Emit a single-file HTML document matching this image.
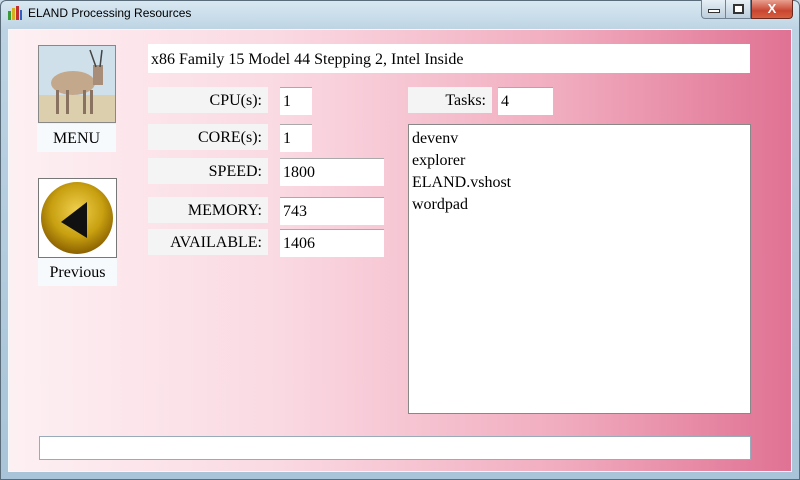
<!DOCTYPE html>
<html><head><style>
*{margin:0;padding:0;box-sizing:border-box}
body{width:800px;height:480px;overflow:hidden;background:#c9dbe8;font-family:"Liberation Serif",serif;font-size:16px;color:#000;position:relative}
.tb{position:absolute;left:0;top:0;width:800px;height:480px;background:linear-gradient(180deg,#d8e8f2,#bcd3e3 30px,#a9c4d8);border:1px solid #5a6b7a;border-radius:6px 6px 0 0}
.title{position:absolute;left:28px;top:6px;font-family:"Liberation Sans",sans-serif;font-size:12px;color:#000}
.client{position:absolute;left:8px;top:29px;width:784px;height:443px;background:linear-gradient(90deg,#fdf0f3 0%,#fad9e2 35%,#f1adc0 70%,#e07294 100%);border:1px solid #f4f8fb}
.a{position:absolute}
.lbl{position:absolute;background:#f4f4f4;text-align:right;padding-right:6px;line-height:28px;height:26px}
.box{position:absolute;background:#fff;padding-left:3px;line-height:28px;height:28px;border-top:1px solid #aaa}
</style></head><body>
<div class="tb"></div>
<svg class="a" style="left:7px;top:5px" width="16" height="16"><rect x="1" y="6" width="3" height="9" fill="#3a9a3a"/><rect x="5" y="3" width="3" height="12" fill="#d4b020"/><rect x="9" y="1" width="3" height="14" fill="#c03030"/><rect x="13" y="5" width="2" height="10" fill="#3060c0"/></svg>
<div class="title">ELAND Processing Resources</div>
<div class="a" style="left:701px;top:0;width:25px;height:19px;border:1px solid #6f8394;border-top:none;border-radius:0 0 0 4px;background:linear-gradient(#e6eff5,#bccddb)"><div class="a" style="left:6px;top:9px;width:12px;height:4px;border:1px solid #333;background:#fff"></div></div>
<div class="a" style="left:725px;top:0;width:26px;height:19px;border:1px solid #6f8394;border-top:none;background:linear-gradient(#e6eff5,#bccddb)"><div class="a" style="left:7px;top:4px;width:11px;height:10px;border:2px solid #333;background:#fff"></div></div>
<div class="a" style="left:751px;top:0;width:42px;height:19px;border:1px solid #6b2a20;border-top:none;border-radius:0 0 4px 0;background:linear-gradient(#e8a090,#c84630 60%,#d86040);color:#fff;font:bold 13px 'Liberation Sans',sans-serif;text-align:center;line-height:17px">X</div>
<div class="client"></div>
<svg class="a" style="left:38px;top:45px" width="78" height="78"><rect width="78" height="78" fill="#cfe0ea"/><rect y="50" width="78" height="28" fill="#dccfae"/><ellipse cx="35" cy="38" rx="22" ry="12" fill="#c4a88c"/><rect x="55" y="20" width="10" height="20" fill="#a88e78"/><line x1="58" y1="22" x2="52" y2="5" stroke="#444" stroke-width="1.5"/><line x1="62" y1="22" x2="64" y2="5" stroke="#444" stroke-width="1.5"/><rect x="18" y="45" width="3" height="24" fill="#8a7260"/><rect x="28" y="45" width="3" height="24" fill="#8a7260"/><rect x="45" y="45" width="3" height="24" fill="#8a7260"/><rect x="52" y="45" width="3" height="24" fill="#8a7260"/><rect x="0.5" y="0.5" width="77" height="77" fill="none" stroke="#888"/></svg>
<div class="a" style="left:37px;top:124px;width:79px;height:28px;background:#f6fafc;text-align:center;line-height:30px">MENU</div>
<div class="a" style="left:38px;top:178px;width:79px;height:80px;background:#fff;border:1px solid #777"></div>
<svg class="a" style="left:39px;top:180px" width="78" height="78"><defs><radialGradient id="g" cx="50%" cy="40%" r="60%"><stop offset="0" stop-color="#f0d050"/><stop offset="0.6" stop-color="#c8a010"/><stop offset="1" stop-color="#8a6000"/></radialGradient></defs><circle cx="38" cy="38" r="36" fill="url(#g)"/><path d="M48 22 L48 58 L22 42 Z" fill="#111"/></svg>
<div class="a" style="left:38px;top:258px;width:79px;height:28px;background:#f6fafc;text-align:center;line-height:30px">Previous</div>
<div class="box" style="left:148px;top:44px;width:602px;height:29px;border:none;line-height:31px">x86 Family 15 Model 44 Stepping 2, Intel Inside</div>
<div class="lbl" style="left:148px;top:87px;width:120px">CPU(s):</div><div class="box" style="left:280px;top:87px;width:32px">1</div>
<div class="lbl" style="left:148px;top:124px;width:120px">CORE(s):</div><div class="box" style="left:280px;top:124px;width:32px">1</div>
<div class="lbl" style="left:148px;top:158px;width:120px">SPEED:</div><div class="box" style="left:280px;top:158px;width:104px">1800</div>
<div class="lbl" style="left:148px;top:197px;width:120px">MEMORY:</div><div class="box" style="left:280px;top:197px;width:104px">743</div>
<div class="lbl" style="left:148px;top:229px;width:120px">AVAILABLE:</div><div class="box" style="left:280px;top:229px;width:104px">1406</div>
<div class="lbl" style="left:408px;top:87px;width:84px">Tasks:</div><div class="box" style="left:498px;top:87px;width:55px">4</div>
<div class="a" style="left:408px;top:124px;width:343px;height:290px;background:#fff;border:1px solid #888;padding:3px 3px;line-height:22px">devenv<br>explorer<br>ELAND.vshost<br>wordpad</div>
<div class="a" style="left:39px;top:436px;width:712px;height:24px;background:#fff;border:1px solid #9ab"></div>
</body></html>
